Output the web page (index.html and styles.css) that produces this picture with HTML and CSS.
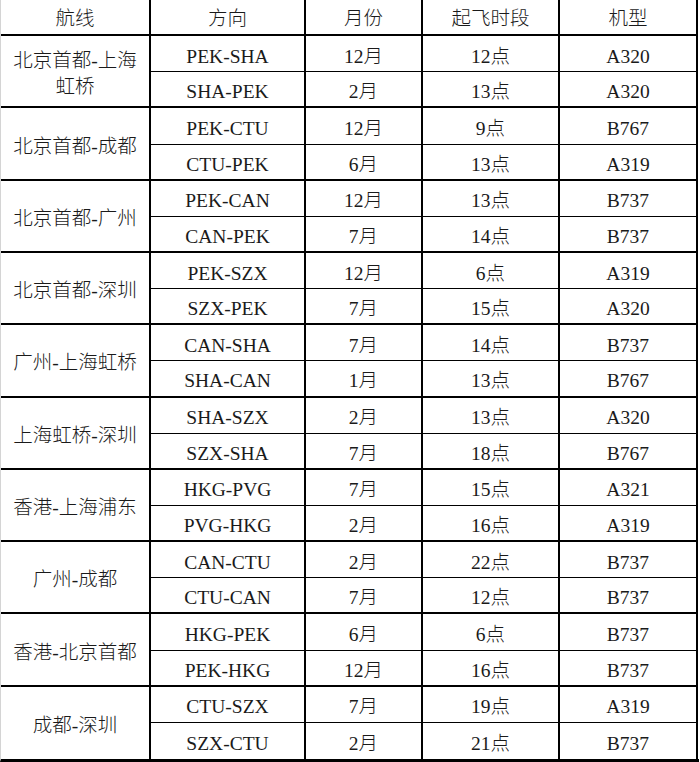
FILE: index.html
```html
<!DOCTYPE html>
<html lang="zh-CN">
<head>
<meta charset="utf-8">
<title>航线表</title>
<link rel="stylesheet" href="styles.css">
</head>
<body>
<div class="table">
  <div class="cell head">航线</div>
  <div class="cell head">方向</div>
  <div class="cell head">月份</div>
  <div class="cell head">起飞时段</div>
  <div class="cell head last">机型</div>

  <div class="cell route">北京首都-上海<br>虹桥</div>
  <div class="cell in">PEK-SHA</div><div class="cell in">12月</div><div class="cell in">12点</div><div class="cell in last">A320</div>
  <div class="cell grp">SHA-PEK</div><div class="cell grp">2月</div><div class="cell grp">13点</div><div class="cell grp last">A320</div>

  <div class="cell route">北京首都-成都</div>
  <div class="cell in">PEK-CTU</div><div class="cell in">12月</div><div class="cell in">9点</div><div class="cell in last">B767</div>
  <div class="cell grp">CTU-PEK</div><div class="cell grp">6月</div><div class="cell grp">13点</div><div class="cell grp last">A319</div>

  <div class="cell route">北京首都-广州</div>
  <div class="cell in">PEK-CAN</div><div class="cell in">12月</div><div class="cell in">13点</div><div class="cell in last">B737</div>
  <div class="cell grp">CAN-PEK</div><div class="cell grp">7月</div><div class="cell grp">14点</div><div class="cell grp last">B737</div>

  <div class="cell route">北京首都-深圳</div>
  <div class="cell in">PEK-SZX</div><div class="cell in">12月</div><div class="cell in">6点</div><div class="cell in last">A319</div>
  <div class="cell grp">SZX-PEK</div><div class="cell grp">7月</div><div class="cell grp">15点</div><div class="cell grp last">A320</div>

  <div class="cell route">广州-上海虹桥</div>
  <div class="cell in">CAN-SHA</div><div class="cell in">7月</div><div class="cell in">14点</div><div class="cell in last">B737</div>
  <div class="cell grp">SHA-CAN</div><div class="cell grp">1月</div><div class="cell grp">13点</div><div class="cell grp last">B767</div>

  <div class="cell route">上海虹桥-深圳</div>
  <div class="cell in">SHA-SZX</div><div class="cell in">2月</div><div class="cell in">13点</div><div class="cell in last">A320</div>
  <div class="cell grp">SZX-SHA</div><div class="cell grp">7月</div><div class="cell grp">18点</div><div class="cell grp last">B767</div>

  <div class="cell route">香港-上海浦东</div>
  <div class="cell in">HKG-PVG</div><div class="cell in">7月</div><div class="cell in">15点</div><div class="cell in last">A321</div>
  <div class="cell grp">PVG-HKG</div><div class="cell grp">2月</div><div class="cell grp">16点</div><div class="cell grp last">A319</div>

  <div class="cell route">广州-成都</div>
  <div class="cell in">CAN-CTU</div><div class="cell in">2月</div><div class="cell in">22点</div><div class="cell in last">B737</div>
  <div class="cell grp">CTU-CAN</div><div class="cell grp">7月</div><div class="cell grp">12点</div><div class="cell grp last">B737</div>

  <div class="cell route">香港-北京首都</div>
  <div class="cell in">HKG-PEK</div><div class="cell in">6月</div><div class="cell in">6点</div><div class="cell in last">B737</div>
  <div class="cell grp">PEK-HKG</div><div class="cell grp">12月</div><div class="cell grp">16点</div><div class="cell grp last">B737</div>

  <div class="cell route final">成都-深圳</div>
  <div class="cell in">CTU-SZX</div><div class="cell in">7月</div><div class="cell in">19点</div><div class="cell in last">A319</div>
  <div class="cell final">SZX-CTU</div><div class="cell final">2月</div><div class="cell final">21点</div><div class="cell final last">B737</div>
</div>
</body>
</html>
```

FILE: styles.css
```css
html, body {
  margin: 0;
  padding: 0;
  background: #ffffff;
}

.table {
  width: 698px;
  display: grid;
  grid-template-columns: 150px 155px 117px 137px 138px;
  grid-template-rows: repeat(21, 36.15px);
  border-left: 1px solid #d4d4d4;
  border-bottom: 3px solid #000;
  font-family: "Liberation Serif", "Noto Sans CJK SC", serif;
  font-size: 19.5px;
  font-weight: 300;
  color: #1a1a1a;
}

.cell {
  box-sizing: border-box;
  display: flex;
  align-items: center;
  justify-content: center;
  text-align: center;
  border-right: 2px solid #000;
  padding-top: 6px;
  line-height: 26px;
}

.cell.last {
  border-right: 2px solid #000;
}

.head {
  border-bottom: 2px solid #000;
  padding-top: 4px;
}

.route {
  grid-row: span 2;
  border-bottom: 2px solid #000;
  padding-top: 6px;
}

.in {
  border-bottom: 1px solid #000;
}

.grp {
  border-bottom: 2px solid #000;
}

.final {
  border-bottom: none;
}
```
